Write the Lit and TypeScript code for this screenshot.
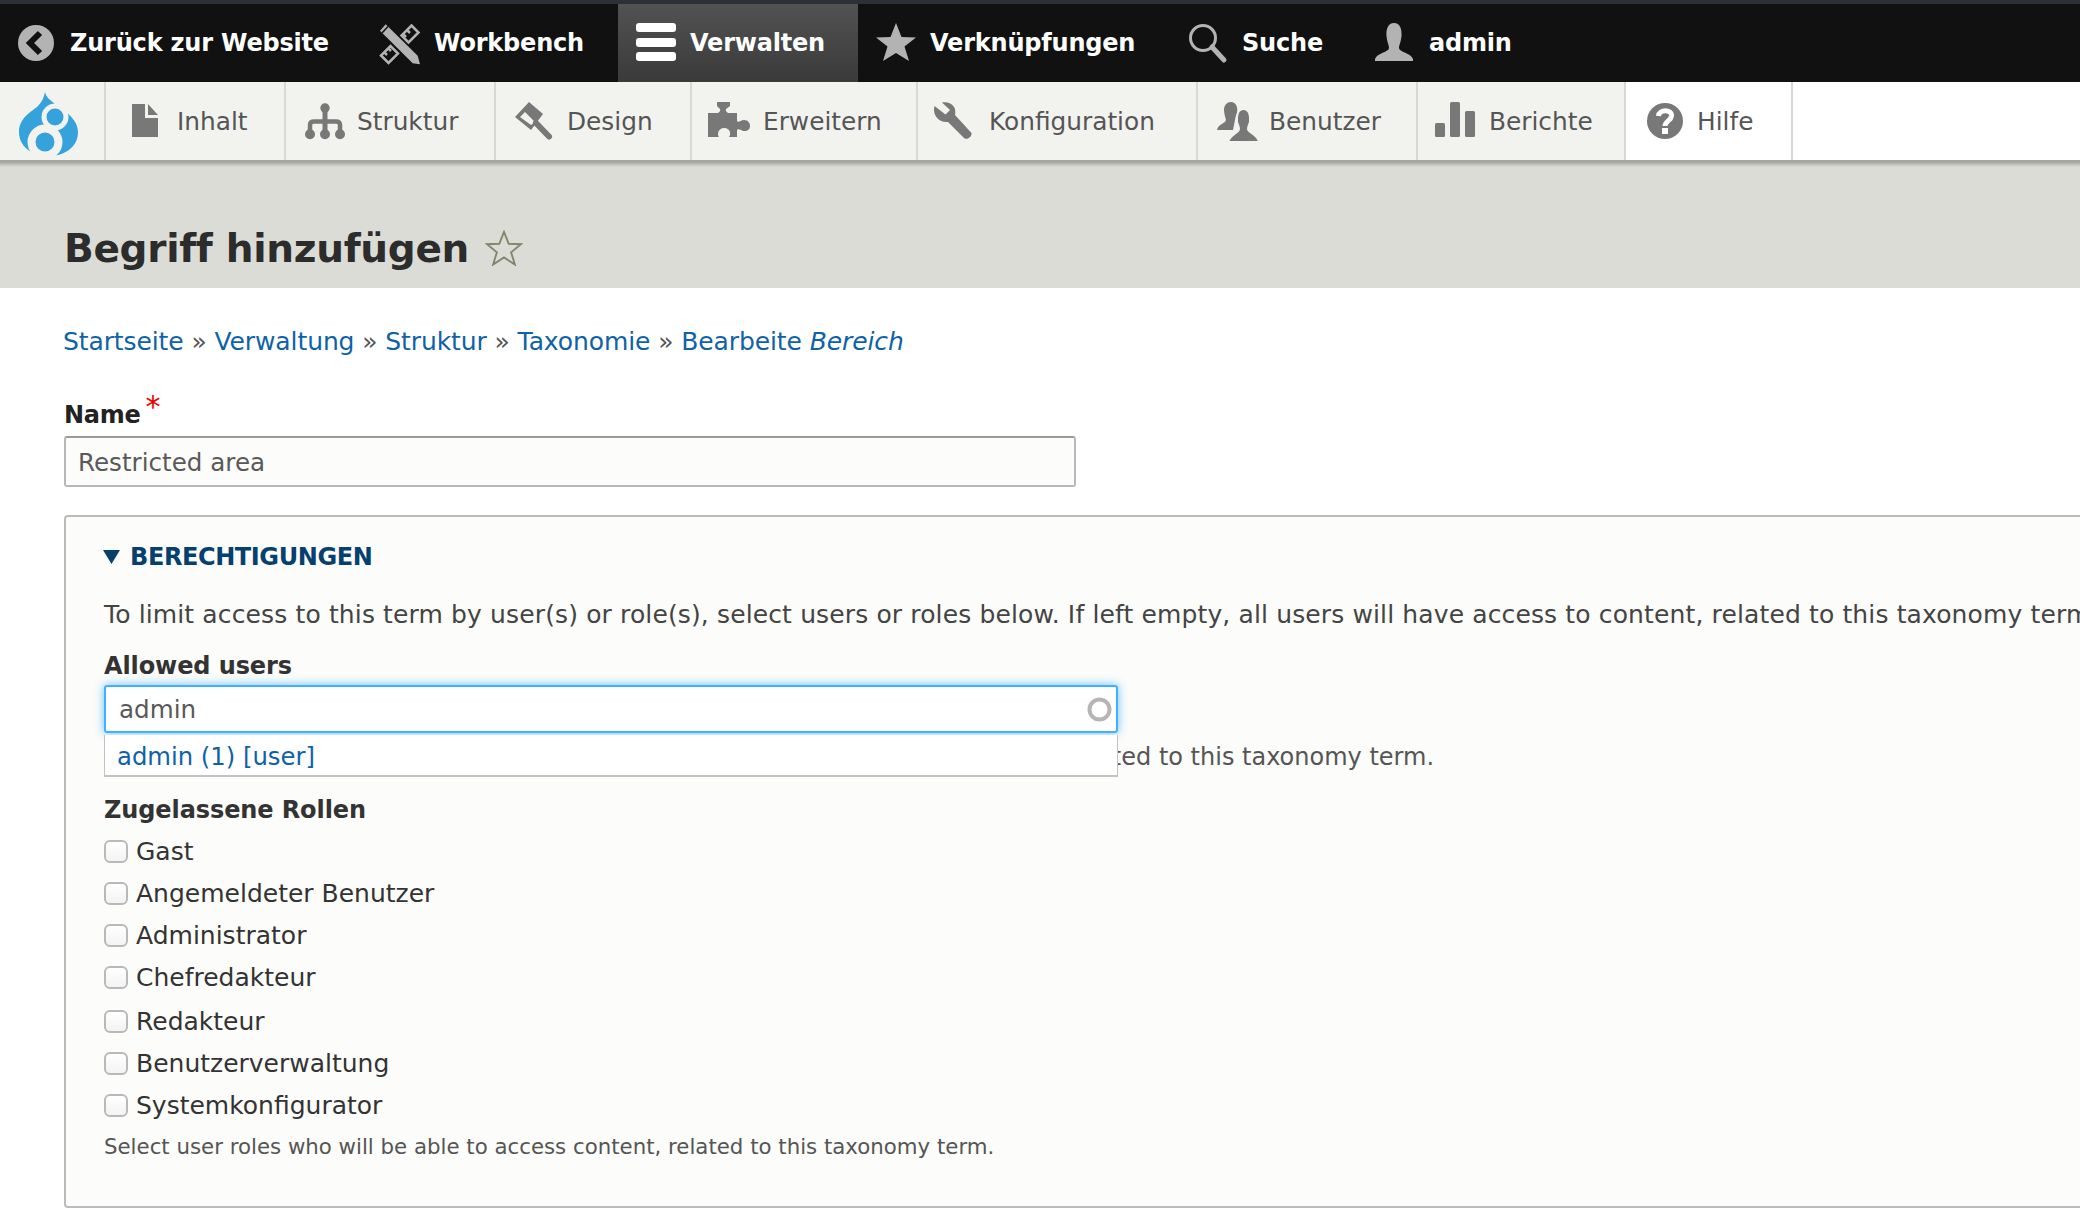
import {LitElement, html, css, svg} from 'lit';
import {customElement} from 'lit/decorators.js';

const ICONS: Record<string, unknown> = {
  back: svg`<circle cx="18" cy="20" r="18" fill="#b3b3b3"/><path d="M22 10 12 20l10 10" fill="none" stroke="#111" stroke-width="6"/>`,
  workbench: svg`<g fill="none" stroke="#b3b3b3" stroke-width="2.500"><path d="M31.500 2.500 38.500 9.500 28.500 19.500 21.500 12.500Z"/><path d="M1 32.500 8.500 40 18 30.500 10.500 23Z"/><path d="M27 7 30 10M23 11 26 14M8 25 11 28M4 29 7 32"/></g><path fill="#b3b3b3" d="M5.700 1.300 0 7.700 32.700 40.300 40 41.300 37.700 32.700Z"/><path d="M2 10 8 3.500" stroke="#111" stroke-width="1.500"/>`,
  menu: svg`<g fill="#fff"><rect y="0" width="40" height="9" rx="3"/><rect y="15" width="40" height="9" rx="3"/><rect y="29" width="40" height="9" rx="3"/></g>`,
  star: svg`<path fill="#b3b3b3" d="M20 0 25.500 14 40 14.500 28.500 23.500 33 38 20 30 7 38 11.500 23.500 0 14.500 14.500 14Z"/>`,
  search: svg`<circle cx="15" cy="15" r="12.500" fill="none" stroke="#b3b3b3" stroke-width="3"/><path d="M24 24 36 37" stroke="#b3b3b3" stroke-width="5" stroke-linecap="round"/>`,
  user: svg`<path fill="#b3b3b3" d="M19 0C25 0 27 6 26.500 13 26 19 24 22 24 25 24 29 36 30 38 36V38H0V36C2 30 14 29 14 25 14 22 12 19 11.500 13 11 6 13 0 19 0Z"/>`,
  file: svg`<path fill="#787878" d="M7 3H20V17H33V36H7Z M23 3 33 14H23Z"/>`,
  tree: svg`<g fill="#787878"><circle cx="20" cy="7" r="4.700"/><circle cx="5" cy="33.300" r="5"/><circle cx="20" cy="33.300" r="5"/><circle cx="35" cy="33.300" r="5"/></g><g fill="none" stroke="#787878"><path stroke-width="5" d="M20 7V32"/><path stroke-width="4.500" d="M5 32V24Q5 20.500 9 20.500H31Q35 20.500 35 24V32"/></g>`,
  brush: svg`<path fill="#787878" fill-rule="evenodd" d="M14 1 28 13 16 29 0 16ZM10 11 5 16 16 24 20 21Z"/><path d="M21 22 34 35.500" fill="none" stroke="#787878" stroke-width="6" stroke-linecap="round"/>`,
  puzzle: svg`<path fill="#787878" d="M-3 12H7Q10 10 9 8L6 5V1H19V5L15 8Q14 10 17 12H26V20C28 22 30 19 33 19 37 19 39 22 39 25 39 28 37 30 33 30 30 30 28 27 26 29V36H18C20 34 20 27 13 27 7 27 6 34 8 36H-3Z"/>`,
  wrench: svg`<path fill="#787878" d="M5 1.500 13 9 8.500 13.500-2.500 5C-5 14 2 22 11 21L27 37C30 39.500 35 36 34.500 32L18 14C20 6 14 0 5 1.500Z"/>`,
  users: svg`<path fill="#787878" d="M14 1C19 1 21 6 20 12 19 15 18 17 18 19L16 29H0C1 23 8 23 9 19 8 15 7 12 7 9 7 4 10 1 14 1Z"/><path fill="#787878" stroke="#f2f3ef" stroke-width="2" d="M26.500 8C32.500 8 33.500 15 33 21 32 24 31 26 31 28 31 32 40 32 42 41H11C13 33 22 32 22 28 22 26 21 24 20 21 19.500 15 20.500 8 26.500 8Z"/>`,
  bars: svg`<g fill="#787878"><rect x="-2" y="22" width="10" height="14" rx="1.500"/><rect x="13" y="1" width="10" height="35" rx="1.500"/><rect x="28" y="10" width="10" height="26" rx="1.500"/></g>`,
  help: svg`<circle cx="20" cy="20" r="18" fill="#787878"/><path d="M13.500 15C14 8 27 8 26.500 15 26 20 20 20 20 25" fill="none" stroke="#fff" stroke-width="5"/><rect x="17" y="27" width="6" height="6" fill="#fff"/>`,
};

const TOP_ITEMS = [
  {label: 'Zurück zur Website', icon: 'back', width: 362},
  {label: 'Workbench', icon: 'workbench', width: 256},
  {label: 'Verwalten', icon: 'menu', width: 240, active: true},
  {label: 'Verknüpfungen', icon: 'star', width: 312},
  {label: 'Suche', icon: 'search', width: 187},
  {label: 'admin', icon: 'user', width: 200},
];

const TABS = [
  {label: 'Inhalt', icon: 'file', width: 180},
  {label: 'Struktur', icon: 'tree', width: 210},
  {label: 'Design', icon: 'brush', width: 196},
  {label: 'Erweitern', icon: 'puzzle', width: 226},
  {label: 'Konfiguration', icon: 'wrench', width: 280},
  {label: 'Benutzer', icon: 'users', width: 220},
  {label: 'Berichte', icon: 'bars', width: 208},
  {label: 'Hilfe', icon: 'help', width: 167, light: true},
];

const ROLES = ['Gast', 'Angemeldeter Benutzer', 'Administrator', 'Chefredakteur', 'Redakteur', 'Benutzerverwaltung', 'Systemkonfigurator'];

@customElement('app-root')
export class AppRoot extends LitElement {
  static styles = css`
    :host {
      display: block;
      width: 2080px;
      height: 1230px;
      overflow: hidden;
      background: #fff;
      color: #333;
      font-family: "DejaVu Sans", sans-serif;
      font-size: 25px;
    }

    .icon {
      width: 40px;
      height: 40px;
      flex: none;
      overflow: visible;
    }

    .toolbar {
      display: flex;
      height: 78px;
      background: #111;
      border-top: 4px solid #2d3035;
    }

    .top-item {
      display: flex;
      align-items: center;
      gap: 14px;
      padding-left: 18px;
      box-sizing: border-box;
      color: #fff;
      font-weight: bold;
      font-size: 24px;
      letter-spacing: -0.2px;
    }

    .top-item:first-child {
      gap: 12px;
    }

    .top-item.active {
      background: linear-gradient(#525252, #3a3a3a);
    }

    .tabs {
      display: flex;
      height: 78px;
      background: #f2f3ef;
    }

    .logo {
      width: 106px;
      flex: none;
      box-sizing: border-box;
      display: flex;
      align-items: center;
      padding-left: 19px;
      border-right: 2px solid #d8d8d4;
    }

    .tab {
      display: flex;
      align-items: center;
      gap: 12px;
      padding-left: 19px;
      box-sizing: border-box;
      color: #555;
      font-size: 24.800px;
      border-right: 2px solid #d8d8d4;
    }

    .tab.light {
      background: #fff;
    }

    .tabs-rest {
      flex: 1;
      background: #fff;
    }

    .page-head {
      height: 128px;
      box-sizing: border-box;
      padding: 64px 0 0 64px;
      background: linear-gradient(#a5a69f 2px, #dbdcd5 7px);
      display: flex;
      align-items: flex-start;
      gap: 16px;
    }

    h1 {
      margin: 0;
      font-size: 39px;
      letter-spacing: -0.3px;
      line-height: 50px;
      font-weight: bold;
      color: #2c2c2c;
    }

    .title-star {
      width: 38px;
      height: 36px;
      margin-top: 6px;
    }

    .content {
      padding-left: 64px;
    }

    .crumbs {
      margin-top: 39px;
      height: 30px;
      line-height: 30px;
      color: #555;
      margin-left: -1px;
      letter-spacing: -0.1px;
    }

    a {
      color: #0f62a8;
      text-decoration: none;
    }

    .name-label {
      margin-top: 43px;
      height: 21px;
      line-height: 30px;
      font-size: 24px;
      letter-spacing: -0.3px;
      font-weight: bold;
      color: #222;
      white-space: nowrap;
    }

    .req {
      color: #e00;
      position: relative;
      top: -6px;
      left: -3px;
      font-size: 30px;
      line-height: 0;
      font-weight: normal;
    }

    .text-input {
      display: block;
      box-sizing: border-box;
      width: 1012px;
      height: 51px;
      padding: 0 13px;
      border: 2px solid #b8b8b8;
      border-top-color: #999;
      border-radius: 3px;
      background: #fcfcfa;
      color: #595959;
      font: 24.600px "DejaVu Sans", sans-serif;
      outline: none;
    }

    .name-input {
      margin-top: 15px;
      padding: 2px 13px 0 12px;
    }

    .fieldset {
      box-sizing: border-box;
      margin-top: 28px;
      width: 2100px;
      height: 693px;
      padding: 25px 0 0 38px;
      border: 2px solid #bbb;
      border-radius: 4px;
      background: #fcfcfa;
    }

    .legend {
      display: flex;
      align-items: center;
      gap: 10px;
      height: 30px;
      margin-left: -1px;
      color: #05406f;
      font-weight: bold;
      font-size: 24px;
      letter-spacing: -0.4px;
    }

    .legend svg {
      width: 17px;
      height: 14px;
    }

    .intro {
      margin-top: 28px;
      height: 30px;
      line-height: 30px;
      white-space: nowrap;
      color: #444;
      letter-spacing: 0.13px;
    }

    .label {
      margin-top: 21px;
      height: 30px;
      line-height: 30px;
      font-size: 24px;
      letter-spacing: -0.1px;
      font-weight: bold;
      color: #333;
    }

    .users {
      position: relative;
      width: 1014px;
      margin-top: 4px;
    }

    .focus {
      width: 1014px;
      height: 48px;
      background: #fff;
      border-color: #40b1ff;
      box-shadow: 0 0 10px rgba(64, 177, 255, 0.8);
    }

    .spinner {
      position: absolute;
      left: 983px;
      top: 12px;
      width: 25px;
      height: 25px;
    }

    .suggest {
      position: absolute;
      left: 0;
      top: 50px;
      width: 1014px;
      height: 42px;
      box-sizing: border-box;
      padding-left: 12px;
      background: #fff;
      border: 1px solid #c2c2c2;
      border-width: 0 1px 2px;
      line-height: 44px;
      font-size: 24.300px;
      color: #0f62a8;
    }

    .users-desc {
      margin-top: 9px;
      height: 30px;
      line-height: 30px;
      font-size: 24px;
      white-space: nowrap;
      color: #555;
    }

    .roles-label {
      margin-top: 23px;
    }

    .roles {
      margin-top: 5px;
    }

    .role {
      display: flex;
      align-items: center;
      height: 42px;
      gap: 8px;
      color: #333;
    }

    .role:nth-child(5) {
      margin-top: 2px;
    }

    .role input {
      appearance: none;
      margin: 0;
      width: 24px;
      height: 23px;
      box-sizing: border-box;
      background: linear-gradient(#fff, #f3f3f3);
      border: 2px solid #b9b9b9;
      border-radius: 6px;
    }

    .hint {
      margin-top: 6px;
      height: 30px;
      line-height: 30px;
      font-size: 21.300px;
      color: #555;
    }
  `;

  private icon(name: string) {
    return svg`<svg class="icon" viewBox="0 0 40 40">${ICONS[name]}</svg>`;
  }

  protected render() {
    return html`
      <div class="toolbar">
        ${TOP_ITEMS.map(
          (item) => html`
            <div class="top-item ${item.active ? 'active' : ''}" style="width:${item.width}px">
              ${this.icon(item.icon)}<span>${item.label}</span>
            </div>
          `
        )}
      </div>
      <div class="tabs">
        <div class="logo">
          <svg width="60" height="70" viewBox="0 0 60 70">
            <path fill="#35a2db" d="M26 6C27 11 31 14 36 18 49 26 59 35 59 46 59 60 47 70 30 70 12 70 0 60 0 46 0 32 12 26 19 20 23 16 25 11 26 6Z"/>
            <g fill="none" stroke="#f2f3ef">
              <circle cx="36" cy="31" r="11" stroke-width="5"/>
              <circle cx="26" cy="56" r="13.500" stroke-width="8"/>
            </g>
          </svg>
        </div>
        ${TABS.map(
          (tab) => html`
            <div class="tab ${tab.light ? 'light' : ''}" style="width:${tab.width}px">
              ${this.icon(tab.icon)}<span>${tab.label}</span>
            </div>
          `
        )}
        <div class="tabs-rest"></div>
      </div>
      <div class="page-head">
        <h1>Begriff hinzufügen</h1>
        <svg class="title-star" viewBox="0 0 40 38">
          <path fill="none" stroke="#85856f" stroke-width="2" d="M20 2 25 14.500 38 15 27.500 23.500 31.500 36.500 20 29 8.500 36.500 12.500 23.500 2 15 15 14.500Z"/>
        </svg>
      </div>
      <div class="content">
        <div class="crumbs">
          <a href="#">Startseite</a> » <a href="#">Verwaltung</a> » <a href="#">Struktur</a> » <a href="#">Taxonomie</a> » <a href="#">Bearbeite <em>Bereich</em></a>
        </div>
        <div class="name-label">Name <span class="req">*</span></div>
        <input class="text-input name-input" .value=${'Restricted area'} />
        <div class="fieldset">
          <div class="legend">
            <svg viewBox="0 0 17 14"><path fill="#05406f" d="M0 0H17L8.500 14Z"/></svg>
            <span>BERECHTIGUNGEN</span>
          </div>
          <div class="intro">To limit access to this term by user(s) or role(s), select users or roles below. If left empty, all users will have access to content, related to this taxonomy term.</div>
          <div class="label">Allowed users</div>
          <div class="users">
            <input class="text-input focus" .value=${'admin'} />
            <svg class="spinner" viewBox="0 0 25 25">
              <circle cx="12.500" cy="12.500" r="10" fill="none" stroke="#b5b5b5" stroke-width="4"/>
            </svg>
            <div class="suggest">admin (1) [user]</div>
          </div>
          <div class="users-desc">Enter a comma separated list of usernames who will be able to access content, related to this taxonomy term.</div>
          <div class="label roles-label">Zugelassene Rollen</div>
          <div class="roles">
            ${ROLES.map(
              (role) => html`<label class="role"><input type="checkbox" /><span>${role}</span></label>`
            )}
          </div>
          <div class="hint">Select user roles who will be able to access content, related to this taxonomy term.</div>
        </div>
      </div>
    `;
  }
}
